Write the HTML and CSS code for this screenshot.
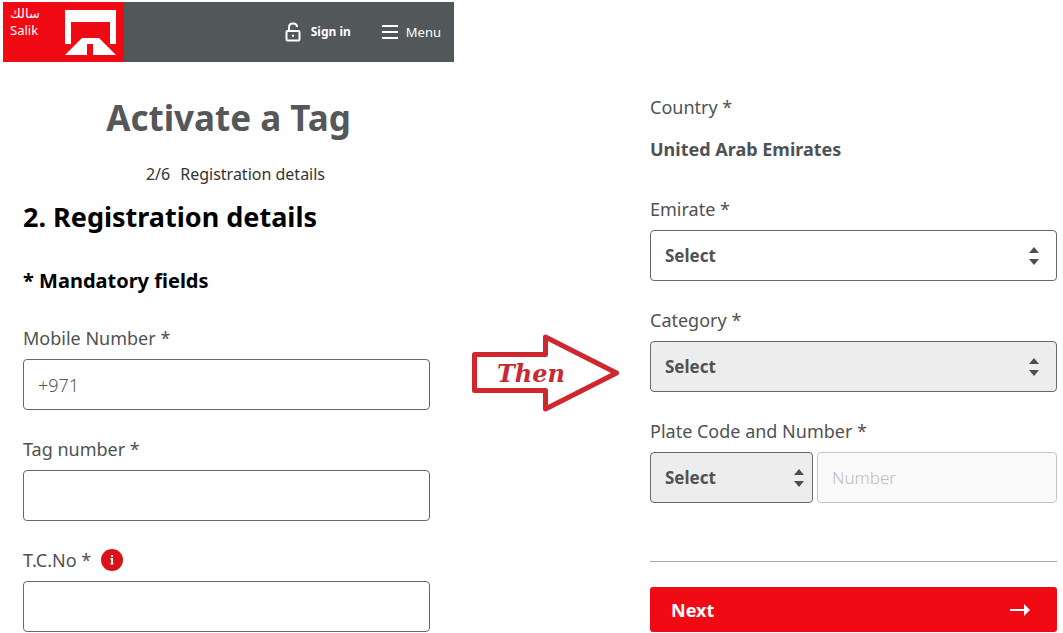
FILE: index.html
```html
<!DOCTYPE html>
<html lang="en">
<head>
<meta charset="utf-8">
<meta name="viewport" content="width=device-width, initial-scale=1">
<title>Activate a Tag</title>
<link rel="stylesheet" href="styles.css">
</head>
<body>
<main class="steps">
  <section class="panel">
    <header class="topbar">
      <a class="brand" href="#">
        <span class="brand-name"><span class="brand-arabic" lang="ar" dir="rtl">سالك</span><span>Salik</span></span>
        <svg class="brand-mark" width="51" height="46" viewBox="0 0 51 46" aria-hidden="true">
          <path fill="#fff" d="M0 0H51V34H45V12H6V34H0ZM17 28H34L51 45H28V34H22V45H0Z"/>
        </svg>
      </a>
      <nav class="topnav">
        <a class="nav-link nav-strong" href="#">
          <svg width="16" height="20" viewBox="0 0 16 20" fill="none" stroke="#fff" stroke-width="2" aria-hidden="true">
            <rect x="1.5" y="9" width="13" height="9.500" rx="1"/>
            <path d="M4 9V5.500Q4 1.500 8 1.500Q12 1.500 12 5"/>
            <path d="M7 13.700H9"/>
          </svg>
          Sign in
        </a>
        <button class="nav-link" type="button">
          <svg width="16" height="14" viewBox="0 0 16 14" stroke="#fff" stroke-width="2" aria-hidden="true"><path d="M0 1H16M0 7H16M0 13H16"/></svg>
          Menu
        </button>
      </nav>
    </header>
    <div class="panel-body">
      <h1 class="title">Activate a Tag</h1>
      <p class="progress"><span>2/6</span><span>Registration details</span></p>
      <h2 class="heading">2. Registration details</h2>
      <p class="mandatory">* Mandatory fields</p>
      <form class="fields">
        <div class="field">
          <label class="label" for="mobile">Mobile Number *</label>
          <input class="control" id="mobile" type="tel" placeholder="+971">
        </div>
        <div class="field">
          <label class="label" for="tag">Tag number *</label>
          <input class="control" id="tag" type="text">
        </div>
        <div class="field">
          <div class="label-row">
            <label class="label" for="tcno">T.C.No *</label>
            <button class="info" type="button" aria-label="About T.C.No">
              <svg width="22" height="22" viewBox="0 0 22 22" aria-hidden="true">
                <circle cx="11" cy="11" r="11" fill="#d9121c"/>
                <path fill="#fff" d="M10 6H12V8H10ZM9.500 9H12V14H12.500V15.500H9.500V14H10V10.500H9.500Z"/>
              </svg>
            </button>
          </div>
          <input class="control" id="tcno" type="text">
        </div>
      </form>
    </div>
  </section>

  <div class="then">
    <svg class="then-shape" width="150" height="80" viewBox="0 0 150 80" aria-hidden="true">
      <path d="M4.500 22.500H75.500V5L146.500 41L75.500 77V58.500H4.500Z" fill="#fff" stroke="#d0272f" stroke-width="5" stroke-linejoin="round"/>
    </svg>
    <span class="then-text">Then</span>
  </div>

  <form class="panel vehicle">
    <div class="country">
      <span class="label">Country *</span>
      <strong class="country-name">United Arab Emirates</strong>
    </div>
    <div class="fields">
      <div class="field">
        <label class="label" for="emirate">Emirate *</label>
        <div class="picker">
          <select class="control" id="emirate"><option>Select</option></select>
          <svg class="picker-icon" width="10" height="20" viewBox="0 0 10 20" aria-hidden="true"><path fill="#4c4f51" d="M0 7L5 1L10 7ZM0 13H10L5 19Z"/></svg>
        </div>
      </div>
      <div class="field">
        <label class="label" for="category">Category *</label>
        <div class="picker">
          <select class="control" id="category" disabled><option>Select</option></select>
          <svg class="picker-icon" width="10" height="20" viewBox="0 0 10 20" aria-hidden="true"><path fill="#4c4f51" d="M0 7L5 1L10 7ZM0 13H10L5 19Z"/></svg>
        </div>
      </div>
      <div class="field">
        <label class="label" for="plate-code">Plate Code and Number *</label>
        <div class="plate">
          <div class="picker picker-narrow">
            <select class="control" id="plate-code" disabled><option>Select</option></select>
            <svg class="picker-icon" width="10" height="20" viewBox="0 0 10 20" aria-hidden="true"><path fill="#4c4f51" d="M0 7L5 1L10 7ZM0 13H10L5 19Z"/></svg>
          </div>
          <input class="control" type="text" placeholder="Number" aria-label="Plate number" disabled>
        </div>
      </div>
    </div>
    <hr class="divider">
    <button class="next" type="button">
      Next
      <svg width="20" height="12" viewBox="0 0 20 12" aria-hidden="true"><path d="M0 6H16" stroke="#fff" stroke-width="2"/><path fill="#fff" d="M14 0L20 6L14 12Z"/></svg>
    </button>
  </form>
</main>
</body>
</html>
```
FILE: styles.css
```css
* {
  box-sizing: border-box;
}

body {
  margin: 0;
  background: #fff;
  color: #4f5254;
  font-family: "Noto Sans", "DejaVu Sans", sans-serif;
  font-size: 18px;
  line-height: 24px;
}

h1, h2, p {
  margin: 0;
}

input, select, button {
  font: inherit;
  color: inherit;
}

.steps {
  display: grid;
  grid-template-columns: 451fr 196fr 407fr;
  padding: 2px 6px 0 3px;
}

.topbar {
  display: flex;
  justify-content: space-between;
  align-items: center;
  height: 60px;
  background: #525759;
  color: #fff;
}

.brand {
  display: flex;
  justify-content: space-between;
  align-self: stretch;
  width: 121px;
  padding: 4px 8px 0 7px;
  background: #f00a14;
  color: #fff;
  text-decoration: none;
}

.brand-name {
  display: flex;
  flex-direction: column;
  align-items: flex-start;
  font-size: 13px;
  line-height: 16px;
}

.brand-arabic {
  font-family: "DejaVu Sans", sans-serif;
}

.brand-mark {
  margin-top: 4px;
}

.topnav {
  display: flex;
  gap: 31px;
  padding-right: 13px;
}

.nav-link {
  display: flex;
  align-items: center;
  gap: 8px;
  padding: 0;
  border: 0;
  background: none;
  color: #fff;
  font-size: 13px;
  line-height: 20px;
  text-decoration: none;
}

.nav-strong {
  gap: 10px;
  font-size: 12px;
  font-weight: 700;
}

.panel-body {
  padding: 32px 24px 0 20px;
}

.title {
  padding-left: 4px;
  color: #555759;
  font-size: 35px;
  line-height: 48px;
  text-align: center;
}

.progress {
  display: flex;
  justify-content: center;
  gap: 10px;
  margin-top: 20px;
  padding-left: 18px;
  color: #333;
  font-size: 16px;
}

.heading {
  margin-top: 11px;
  color: #000;
  font-size: 27px;
  line-height: 40px;
}

.mandatory {
  margin-top: 32px;
  color: #000;
  font-size: 20px;
  font-weight: 700;
}

.fields {
  display: grid;
  gap: 27px;
}

.panel-body .fields {
  margin-top: 33px;
}

.field {
  display: grid;
  gap: 9px;
}

.label-row {
  display: flex;
  align-items: center;
  gap: 10px;
}

.info {
  display: flex;
  padding: 0;
  border: 0;
  background: none;
}

.control {
  width: 100%;
  min-width: 0;
  height: 51px;
  padding: 0 14px;
  border: 1px solid #66696b;
  border-radius: 4px;
  background: #fff;
  color: #4f5254;
}

.control::placeholder {
  color: #55585a;
  font-weight: 300;
  opacity: 1;
}

.picker {
  position: relative;
}

.picker .control {
  appearance: none;
  font-size: 17px;
  font-weight: 700;
  opacity: 1;
}

.picker .control:disabled {
  background: #ededed;
}

.picker-icon {
  position: absolute;
  top: 16px;
  right: 18px;
  pointer-events: none;
}

.picker-narrow .picker-icon {
  right: 9px;
}

.plate {
  display: grid;
  grid-template-columns: 163fr 240fr;
  gap: 4px;
}

.plate > .control:disabled {
  border-color: #c4c4c4;
  background: #fafafa;
  font-size: 17px;
}

.plate > .control::placeholder {
  color: #bcbcbc;
}

.then {
  position: relative;
  justify-self: start;
  align-self: start;
  margin: 330px 0 0 16px;
}

.then-shape {
  display: block;
}

.then-text {
  position: absolute;
  top: 30px;
  left: 27px;
  color: #c62a35;
  font-family: "DejaVu Serif", serif;
  font-size: 24px;
  font-style: italic;
  font-weight: 700;
}

.vehicle {
  padding-top: 93px;
}

.country {
  display: grid;
  gap: 18px;
  margin-bottom: 36px;
}

.divider {
  height: 1px;
  margin: 58px 0 25px;
  border: 0;
  background: #a6a6a6;
}

.next {
  display: flex;
  justify-content: space-between;
  align-items: center;
  width: 100%;
  height: 45px;
  padding: 0 27px 0 21px;
  border: 0;
  border-radius: 3px;
  background: #f00a14;
  color: #fff;
  font-weight: 700;
}
```
